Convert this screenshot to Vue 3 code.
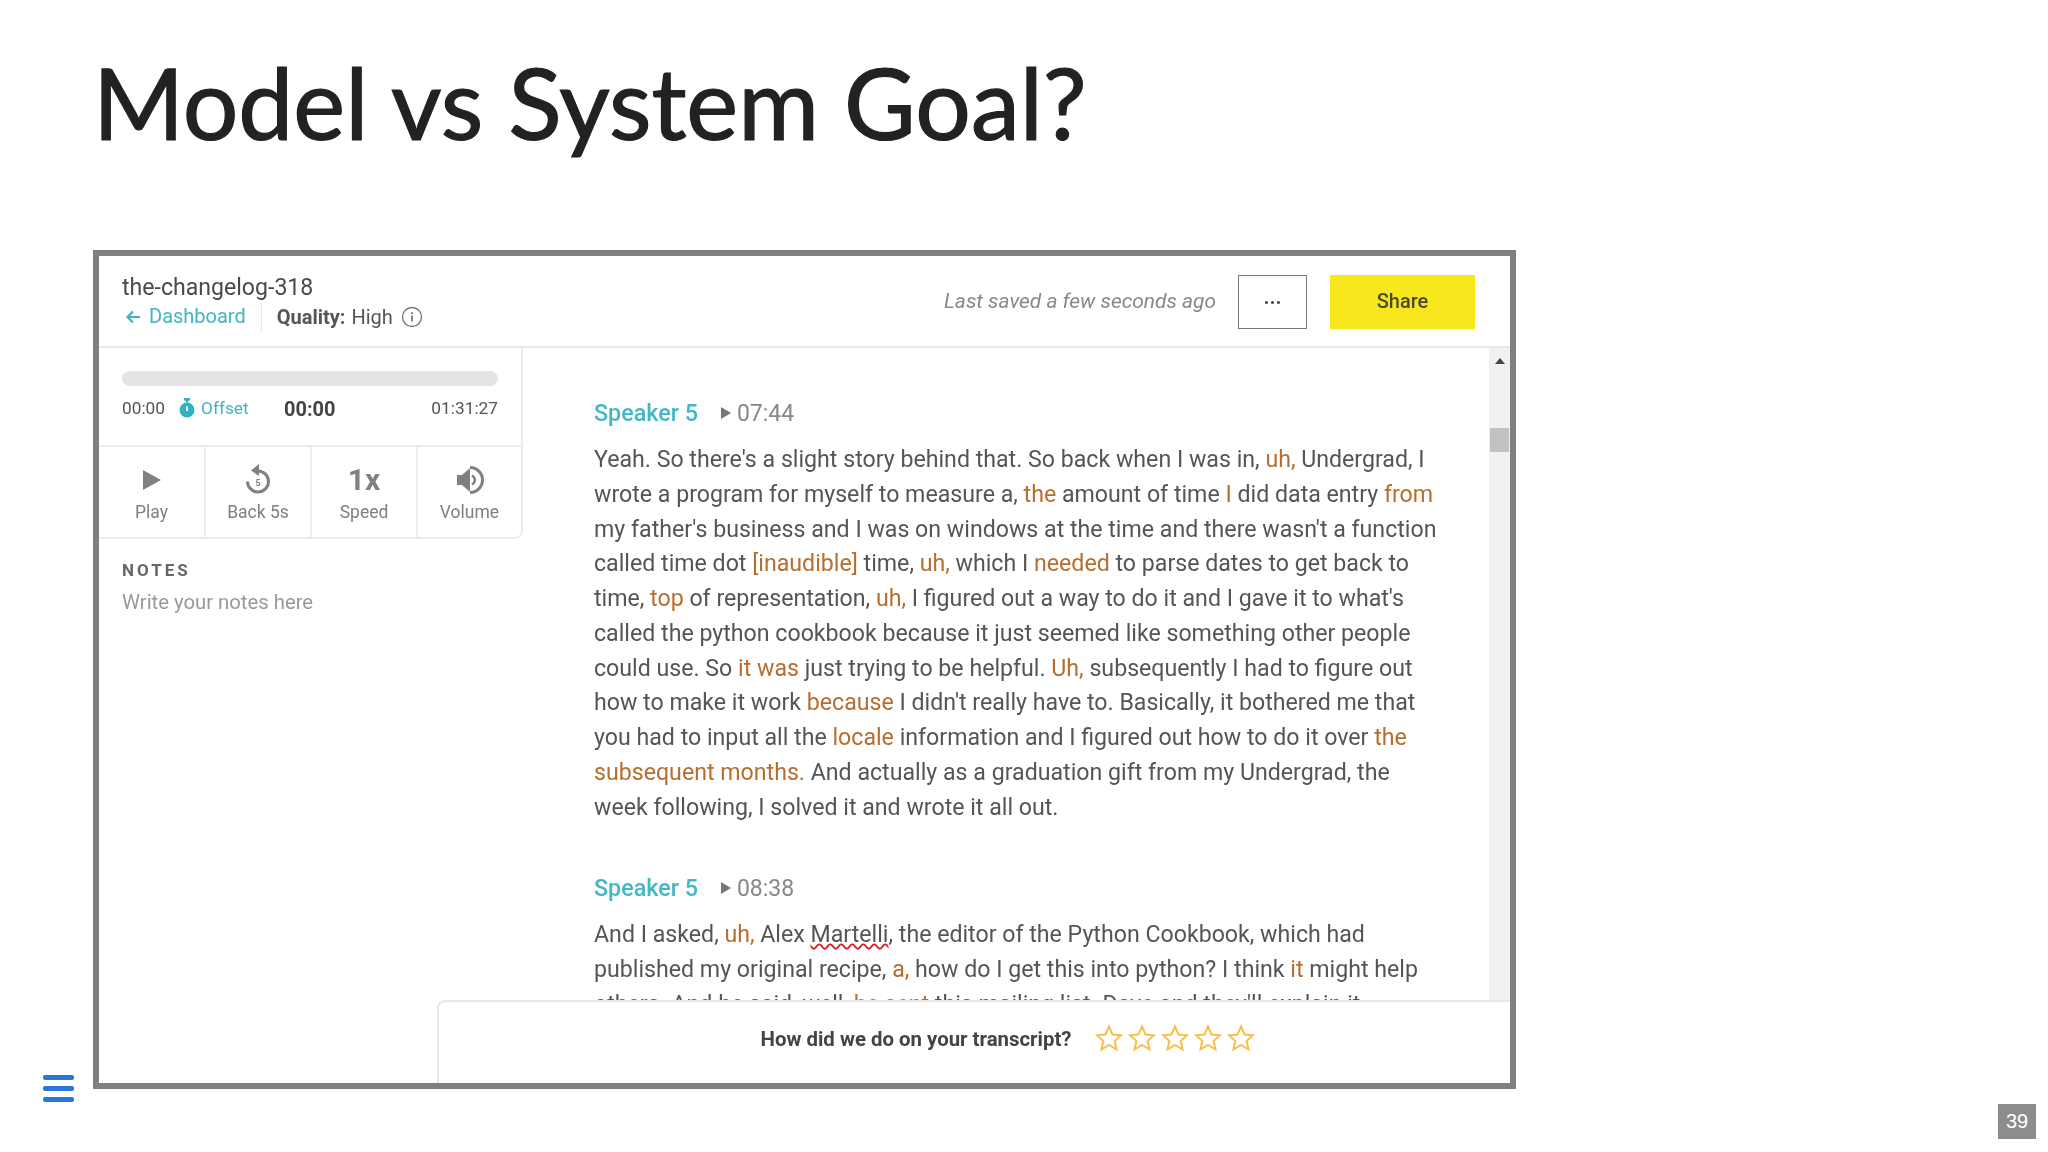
<template>
  <div class="slide">
    <h1 class="slide-title">Model vs System Goal?</h1>

    <div class="shot">
      <header class="top">
        <div class="top-left">
          <div class="file-name">the-changelog-318</div>
          <div class="top-meta">
            <a class="back">
              <svg width="16" height="14" viewBox="0 0 16 14"><path d="M8 1.500 2.500 7 8 12.500M3 7h12" fill="none" stroke="#3fb5c3" stroke-width="2.200"/></svg>
              <span class="back-label">Dashboard</span>
            </a>
            <span class="quality"><b>Quality:</b> High
              <svg class="info" width="22" height="22" viewBox="0 0 22 22"><circle cx="11" cy="11" r="9.500" fill="none" stroke="#777" stroke-width="1.300"/><path d="M11 9.500v6M11 6.200v1.800" stroke="#777" stroke-width="1.800"/></svg>
            </span>
          </div>
        </div>
        <div class="top-right">
          <em class="saved">Last saved a few seconds ago</em>
          <button class="more">···</button>
          <button class="share">Share</button>
        </div>
      </header>

      <div class="body">
        <aside class="side">
          <div class="player">
            <div class="progress"></div>
            <div class="times">
              <span class="time-start">00:00</span>
              <span class="offset">
                <svg width="16" height="20" viewBox="0 0 16 20"><path d="M5 0h6v2.500H9.300v2H6.700v-2H5z" fill="#2fb3c4"/><circle cx="8" cy="12" r="7.500" fill="#2fb3c4"/><path d="M8 8.500v4.500" stroke="#fff" stroke-width="2"/></svg>
                Offset
              </span>
              <span class="time-now">00:00</span>
              <span class="time-end">01:31:27</span>
            </div>
            <div class="controls">
              <div class="control">
                <div class="control-icon">
                  <svg width="24" height="24" viewBox="0 0 24 24"><path d="M3 2 21 12 3 22z" fill="#808080"/></svg>
                </div>
                <span>Play</span>
              </div>
              <div class="control">
                <div class="control-icon">
                  <svg width="28" height="32" viewBox="0 0 28 32"><path d="M14 7a10.500 10.500 0 1 1-10.500 10.500" fill="none" stroke="#808080" stroke-width="3"/><path d="M15 0v12L7 6.500z" fill="#808080"/><text x="14" y="21.500" class="mini">5</text></svg>
                </div>
                <span>Back 5s</span>
              </div>
              <div class="control">
                <div class="control-icon"><b class="speed">1x</b></div>
                <span>Speed</span>
              </div>
              <div class="control">
                <div class="control-icon">
                  <svg width="28" height="28" viewBox="0 0 28 28"><path d="M1 9h5l8-7v24l-8-7H1z" fill="#808080"/><path d="M16 9.500a5 5 0 0 1 0 9" fill="none" stroke="#808080" stroke-width="2.400"/><path d="M14 1.500a12.500 12.500 0 0 1 0 25" fill="none" stroke="#808080" stroke-width="3"/></svg>
                </div>
                <span>Volume</span>
              </div>
            </div>
          </div>
          <div class="notes">
            <div class="notes-title">NOTES</div>
            <div class="notes-hint">Write your notes here</div>
          </div>
        </aside>

        <main class="transcript">
          <section v-for="block in blocks" :key="block.time" class="block">
            <div class="block-head">
              <span class="speaker">Speaker 5</span>
              <span class="stamp"><i class="tri"></i>{{ block.time }}</span>
            </div>
            <p class="para">
              <span v-for="(line, i) in block.lines" :key="i" class="line">
                <span v-for="(part, j) in split(line)" :key="j" :class="part.cls">{{ part.text }}</span>
              </span>
            </p>
          </section>
        </main>

        <div class="scrollbar">
          <i class="arrow"></i>
          <i class="thumb"></i>
        </div>
      </div>

      <div class="rating">
        <span class="rating-q">How did we do on your transcript?</span>
        <span class="stars">
          <svg v-for="n in 5" :key="n" width="28" height="28" viewBox="0 0 28 28"><path d="M14 2.500 17.500 10.500 26 11.300 19.600 17 21.500 25.500 14 21 6.500 25.500 8.400 17 2 11.300 10.500 10.500z" fill="none" stroke="#f6c04f" stroke-width="2"/></svg>
        </span>
      </div>
    </div>

    <div class="menu"><i></i><i></i><i></i></div>
    <div class="page">39</div>
  </div>
</template>

<script setup>
// {x} = filler / low confidence word, ~x~ = spellcheck underline
const blocks = [
  {
    time: '07:44',
    lines: [
      'Yeah. So there\'s a slight story behind that. So back when I was in, {uh,} Undergrad, I',
      'wrote a program for myself to measure a, {the} amount of time {I} did data entry {from}',
      'my father\'s business and I was on windows at the time and there wasn\'t a function',
      'called time dot {[inaudible]} time, {uh,} which I {needed} to parse dates to get back to',
      'time, {top} of representation, {uh,} I figured out a way to do it and I gave it to what\'s',
      'called the python cookbook because it just seemed like something other people',
      'could use. So {it was} just trying to be helpful. {Uh,} subsequently I had to figure out',
      'how to make it work {because} I didn\'t really have to. Basically, it bothered me that',
      'you had to input all the {locale} information and I figured out how to do it over {the}',
      '{subsequent months.} And actually as a graduation gift from my Undergrad, the',
      'week following, I solved it and wrote it all out.'
    ]
  },
  {
    time: '08:38',
    lines: [
      'And I asked, {uh,} Alex ~Martelli~, the editor of the Python Cookbook, which had',
      'published my original recipe, {a,} how do I get this into python? I think {it} might help',
      'others. And he said, well, {he sent} this mailing list. Dave and they\'ll explain it'
    ]
  }
];

const split = (line) => {
  return line.split(/(\{[^}]*\}|~[^~]*~)/).filter(Boolean).map((text) => {
    if (text[0] === '{') return { text: text.slice(1, -1), cls: 'low' };
    if (text[0] === '~') return { text: text.slice(1, -1), cls: 'typo' };
    return { text, cls: '' };
  });
};
</script>

<style>
html, body {
  margin: 0;
  background: #fff;
}
</style>

<style scoped>
.slide {
  position: relative;
  width: 2048px;
  height: 1152px;
  overflow: hidden;
  padding: 44px 0 0 93px;
  box-sizing: border-box;
  font-family: Roboto, "Liberation Sans", sans-serif;
  background: #fff;
}

.slide-title {
  margin: 0 0 50px;
  font: 400 98.200px/116px Lato, "Liberation Sans", sans-serif;
  -webkit-text-stroke: 1.200px #222;
  color: #222;
  height: 156px;
}

.shot {
  position: relative;
  width: 1423px;
  height: 839px;
  box-sizing: border-box;
  border: 6px solid #808080;
  overflow: hidden;
  background: #fff;
  color: #555;
  filter: blur(0.35px);
}

.top {
  display: flex;
  justify-content: space-between;
  height: 92px;
  box-sizing: border-box;
  border-bottom: 2px solid #e8e8e8;
  padding: 18px 35px 0 23px;
}

.file-name {
  font-size: 23.100px;
  line-height: 28px;
  color: #4a4a4a;
}

.top-meta {
  display: flex;
  align-items: center;
  font-size: 20px;
}

.back {
  display: flex;
  align-items: center;
  gap: 8px;
  padding: 0 15px 0 3px;
  height: 30px;
  color: #3fb5c3;
  border-right: 1px solid #e8e8e8;
}

.back-label {
  margin-top: -2px;
}

.quality {
  display: flex;
  align-items: center;
  gap: 6px;
  margin-left: 15px;
  color: #555;
}

.quality b {
  font-weight: 700;
}

.info {
  margin-left: 2px;
}

.top-right {
  display: flex;
  align-items: flex-start;
}

.saved {
  font-size: 20.900px;
  line-height: 54px;
  color: #888;
  margin-right: 22px;
}

.more,
.share {
  height: 54px;
  margin-top: 1px;
  font-family: inherit;
  cursor: pointer;
  padding: 0;
}

.more {
  width: 69px;
  border: 1px solid #777;
  background: #fff;
  color: #444;
  font-size: 20px;
  font-weight: 700;
  margin-right: 23px;
}

.share {
  width: 145px;
  border: 0;
  background: #f8e71c;
  color: #4a4a2a;
  font-size: 20px;
  font-weight: 500;
  padding-bottom: 2px;
}

.body {
  display: flex;
  height: 735px;
}

.side {
  width: 424px;
  flex: none;
}

.player {
  padding-top: 23px;
  border: solid #ececec;
  border-width: 0 2px 2px 0;
  border-bottom-right-radius: 8px;
}

.progress {
  height: 15px;
  margin: 0 23px;
  border-radius: 8px;
  background: #e4e4e4;
}

.times {
  display: flex;
  align-items: center;
  height: 59px;
  padding: 0 23px 15px;
  box-sizing: border-box;
  font-size: 17.300px;
  color: #555;
}

.time-start {
  width: 44px;
}

.offset {
  display: flex;
  align-items: center;
  gap: 6px;
  margin-left: 13px;
  color: #3fb5c3;
  width: 105px;
}

.time-now {
  font-size: 20px;
  font-weight: 700;
  color: #444;
  padding-top: 2px;
}

.time-end {
  margin-left: auto;
}

.controls {
  display: grid;
  grid-template-columns: 107px 106px 106px 1fr;
  height: 90px;
  border-top: 2px solid #ececec;
}

.control {
  display: flex;
  flex-direction: column;
  align-items: center;
  padding-top: 14px;
  box-sizing: border-box;
  font-size: 17.500px;
  color: #808080;
  border-right: 2px solid #ececec;
}

.control:last-child {
  border-right: 0;
}

.control-icon {
  display: flex;
  align-items: center;
  justify-content: center;
  height: 38px;
  margin-bottom: 3px;
}

.speed {
  font-size: 30px;
  line-height: 36px;
  font-weight: 700;
  color: #808080;
}

.mini {
  font-size: 9px;
  font-weight: 700;
  fill: #808080;
  text-anchor: middle;
}

.notes {
  padding: 21px 23px;
}

.notes-title {
  font-size: 17px;
  font-weight: 700;
  letter-spacing: 3px;
  color: #666;
}

.notes-hint {
  margin-top: 10px;
  font-size: 20.300px;
  color: #999;
}

.transcript {
  flex: 1;
  padding: 0 0 0 71px;
  overflow: hidden;
}

.block {
  margin-top: 50px;
}

.block + .block {
  margin-top: 48px;
}

.block-head {
  display: flex;
  align-items: center;
  gap: 23px;
  height: 30px;
}

.speaker {
  font-size: 23.300px;
  font-weight: 500;
  color: #44b7c6;
}

.stamp {
  display: flex;
  align-items: center;
  gap: 6px;
  font-size: 23px;
  color: #888;
}

.tri {
  width: 0;
  height: 0;
  border: solid transparent;
  border-width: 6px 0 6px 10px;
  border-left-color: #777;
}

.para {
  margin: 15px 0 0;
  font-size: 23.170px;
  line-height: 34.750px;
}

.line {
  display: block;
  white-space: nowrap;
}

.low {
  color: #b66e2f;
}

.typo {
  text-decoration: underline wavy #d22;
  text-decoration-thickness: 1.500px;
}

.scrollbar {
  position: relative;
  width: 21px;
  flex: none;
  background: #f1f1f1;
}

.arrow {
  position: absolute;
  top: 10px;
  left: 6px;
  border: solid transparent;
  border-width: 0 5px 6px;
  border-bottom-color: #444;
}

.thumb {
  position: absolute;
  top: 80px;
  left: 1px;
  width: 19px;
  height: 24px;
  background: #c1c1c1;
}

.rating {
  position: absolute;
  right: 0;
  bottom: 0;
  left: 338px;
  height: 83px;
  box-sizing: border-box;
  display: flex;
  justify-content: center;
  gap: 24px;
  padding: 22px 0 0 67px;
  background: #fff;
  border: solid #e8e8e8;
  border-width: 2px 0 0 2px;
  border-top-left-radius: 8px;
}

.rating-q {
  font-size: 20.400px;
  font-weight: 700;
  line-height: 30px;
  color: #444;
}

.stars {
  display: flex;
  gap: 5px;
  height: 30px;
}

.menu {
  position: absolute;
  left: 43px;
  top: 1075px;
  display: flex;
  flex-direction: column;
  gap: 6px;
}

.menu i {
  display: block;
  width: 31px;
  height: 5px;
  border-radius: 2px;
  background: #2a76dd;
}

.page {
  position: absolute;
  left: 1998px;
  top: 1104px;
  width: 38px;
  height: 35px;
  background: #8c8c8c;
  color: #fff;
  font: 20px/35px "Liberation Sans", sans-serif;
  text-align: center;
}
</style>
